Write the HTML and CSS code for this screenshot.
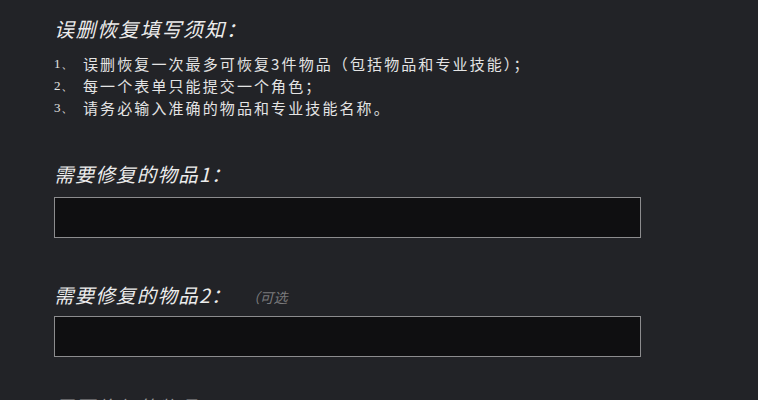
FILE: index.html
```html
<!DOCTYPE html>
<html lang="zh">
<head>
<meta charset="utf-8">
<link rel="stylesheet" href="styles.css">
</head>
<body>
<div class="page">
  <h1 class="title">误删恢复填写须知：</h1>
  <ol class="notes">
    <li><span class="num">1、</span><span>误删恢复一次最多可恢复3件物品（包括物品和专业技能）；</span></li>
    <li><span class="num">2、</span><span>每一个表单只能提交一个角色；</span></li>
    <li><span class="num">3、</span><span>请务必输入准确的物品和专业技能名称。</span></li>
  </ol>
  <div class="field field-1">
    <div class="label">需要修复的物品1：</div>
    <div class="box"></div>
  </div>
  <div class="field field-2">
    <div class="label">需要修复的物品2：<span class="opt">（可选</span></div>
    <div class="box"></div>
  </div>
  <div class="field field-3">
    <div class="label">需要修复的物品3：<span class="opt">（可选</span></div>
    <div class="box"></div>
  </div>
</div>
</body>
</html>
```
FILE: styles.css
```css
html, body {
  margin: 0;
  padding: 0;
  background: #222327;
  overflow: hidden;
}
.page {
  padding: 17px 0 0 54px;
  font-family: "Noto Sans CJK SC", "Noto Sans", sans-serif;
  color: #e6e6e6;
}
.title {
  margin: 0;
  font-size: 20px;
  line-height: 24px;
  letter-spacing: 1.5px;
  font-weight: 400;
  font-style: italic;
  color: #ececec;
}
.notes {
  list-style: none;
  margin: 12px 0 0 0;
  padding: 0;
  font-size: 15px;
  line-height: 22px;
  letter-spacing: 2.1px;
  color: #e4e4e4;
}
.notes li {
  display: flex;
}
.num {
  width: 29px;
  flex: none;
  letter-spacing: 0;
  font-family: "Liberation Serif", serif;
  font-size: 13px;
}
.field-1 { margin-top: 43px; }
.field-2 { margin-top: 45px; }
.field-3 { margin-top: 38px; }
.label {
  font-size: 19.5px;
  line-height: 24px;
  letter-spacing: 1.2px;
  font-style: italic;
  color: #ececec;
}
.field-3 .label {
  color: #9a9a9c;
}
.opt {
  font-size: 14px;
  letter-spacing: 0;
  color: #7a7a7c;
  margin-left: 14px;
}
.field-1 .box { margin-top: 11px; }
.field-2 .box { margin-top: 7px; }
.field-3 .box { margin-top: 9px; }
.box {
  box-sizing: border-box;
  width: 587px;
  height: 41px;
  border: 1.5px solid #8c8c8e;
  background: #0f0f11;
}
```
